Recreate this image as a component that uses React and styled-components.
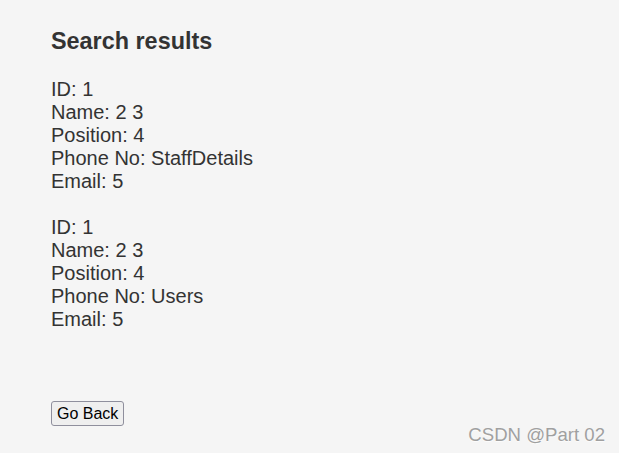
import React from "react";
import styled, { createGlobalStyle } from "styled-components";

const Global = createGlobalStyle`
  html, body { margin: 0; padding: 0; background: #f5f5f5; }
  body { font-family: "Liberation Sans", Arial, sans-serif; color: #333; }
`;

const Page = styled.div`
  position: relative;
  width: 619px;
  height: 453px;
  box-sizing: border-box;
  padding: 28px 0 0 51px;
  display: flex;
  flex-direction: column;
  align-items: flex-start;
  overflow: hidden;
`;

const Title = styled.h3`
  margin: 0;
  font-size: 23.4px;
  line-height: 27px;
  font-weight: bold;
  color: #333;
`;

const Results = styled.div`
  margin-top: 22.5px;
  display: flex;
  flex-direction: column;
  gap: 23px;
`;

const Record = styled.div`
  display: flex;
  flex-direction: column;
  font-size: 20px;
  line-height: 23px;
  color: #333;
`;

const Button = styled.button`
  margin-top: 70.5px;
  font-family: "Liberation Sans", Arial, sans-serif;
  font-size: 16px;
  height: 25px;
  padding: 0 5px;
  color: #000;
  background: #efefef;
  border: 1px solid #8f8f9d;
  border-radius: 3px;
`;

const Watermark = styled.div`
  position: absolute;
  right: 14px;
  bottom: 7px;
  font-size: 18.6px;
  color: #a0a0a0;
  text-shadow: 0 1px 1px rgba(255,255,255,0.8);
`;

const records = [
  { id: 1, name: "2 3", position: 4, phone: "StaffDetails", email: 5 },
  { id: 1, name: "2 3", position: 4, phone: "Users", email: 5 },
];

export default function App() {
  return (
    <>
      <Global />
      <Page>
        <Title>Search results</Title>
        <Results>
          {records.map((r, i) => (
            <Record key={i}>
              <span>ID: {r.id}</span>
              <span>Name: {r.name}</span>
              <span>Position: {r.position}</span>
              <span>Phone No: {r.phone}</span>
              <span>Email: {r.email}</span>
            </Record>
          ))}
        </Results>
        <Button>Go Back</Button>
        <Watermark>CSDN @Part 02</Watermark>
      </Page>
    </>
  );
}
